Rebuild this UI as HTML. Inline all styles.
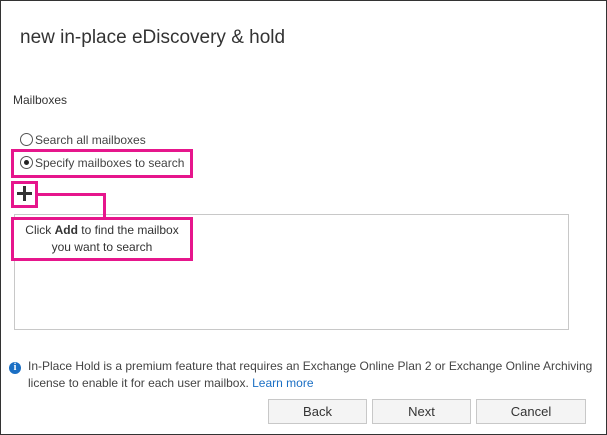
<!DOCTYPE html>
<html><head><style>
body{margin:0;width:607px;height:435px;overflow:hidden;font-family:"Liberation Sans",sans-serif;background:#fff;position:relative}
.frame{position:absolute;left:0;top:0;width:605px;height:433px;border:1px solid #333}
.a{position:absolute;white-space:nowrap}
.pk{position:absolute;border:3px solid #e6168c;box-sizing:border-box}
.btn{position:absolute;top:399px;height:25px;border:1px solid #c8c8c8;background:#f4f4f4;box-sizing:border-box;font-size:13px;color:#333;text-align:center;line-height:23px}
.radio{display:inline-block;width:11px;height:11px;border:1px solid #555;border-radius:50%;vertical-align:-2px;margin-right:2px;position:relative;background:#fff}
</style></head><body>
<div class="frame"></div>
<div class="a" style="left:20px;top:27px;font-size:19px;color:#333">new in-place eDiscovery &amp; hold</div>
<div class="a" style="left:13px;top:93px;font-size:12px;color:#333">Mailboxes</div>
<div class="a" style="left:20px;top:133px;font-size:12px;color:#444"><span class="radio"></span>Search all mailboxes</div>
<div class="a" style="left:20px;top:156px;font-size:12px;color:#444"><span class="radio"><span style="position:absolute;left:3px;top:3px;width:5px;height:5px;border-radius:50%;background:#222"></span></span>Specify mailboxes to search</div>
<div class="pk" style="left:11px;top:149px;width:182px;height:29px"></div>
<div style="position:absolute;left:14px;top:214px;width:553px;height:114px;border:1px solid #c8c8c8"></div>
<div class="pk" style="left:11px;top:181px;width:27px;height:27px"></div>
<div style="position:absolute;left:17px;top:192px;width:15px;height:3px;background:#333"></div>
<div style="position:absolute;left:23px;top:186px;width:3px;height:15px;background:#333"></div>
<div style="position:absolute;left:38px;top:193px;width:68px;height:3px;background:#e6168c"></div>
<div style="position:absolute;left:103px;top:193px;width:3px;height:26px;background:#e6168c"></div>
<div class="pk" style="left:11px;top:217px;width:182px;height:44px;background:#fff"></div>
<div class="a" style="left:11px;top:222px;width:182px;text-align:center;font-size:12px;color:#333;line-height:17px">Click <b>Add</b> to find the mailbox<br>you want to search</div>
<div style="position:absolute;left:9px;top:362px;width:12px;height:12px;border-radius:50%;background:#1a6fc4;color:#fff;font-size:10px;font-weight:bold;text-align:center;line-height:12px;font-family:'Liberation Serif',serif">i</div>
<div class="a" style="left:28px;top:358px;font-size:12px;color:#444;line-height:17px">In-Place Hold is a premium feature that requires an Exchange Online Plan 2 or Exchange Online Archiving<br>license to enable it for each user mailbox. <span style="color:#1a6fc4">Learn more</span></div>
<div class="btn" style="left:268px;width:99px">Back</div>
<div class="btn" style="left:372px;width:99px">Next</div>
<div class="btn" style="left:476px;width:110px">Cancel</div>
</body></html>
